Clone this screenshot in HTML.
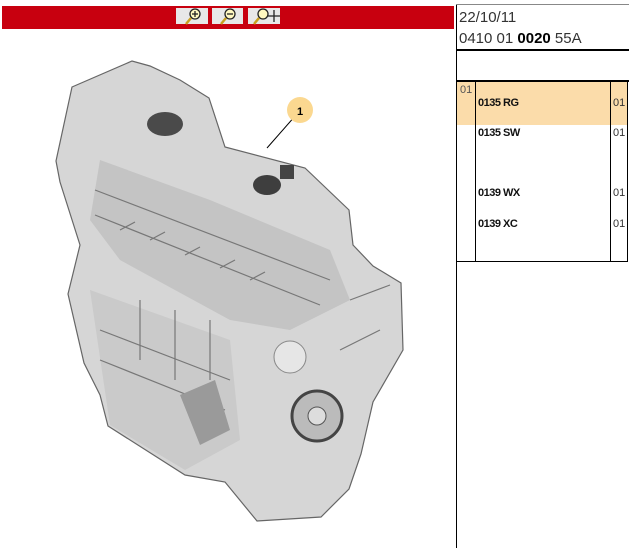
<!DOCTYPE html>
<html><head><style>
body{margin:0;width:629px;height:548px;background:#fff;position:relative;overflow:hidden;font-family:"Liberation Sans",Arial,sans-serif}
.abs{position:absolute}
.ic{position:absolute;top:8px;height:16px;background:#e8e8e8}
.t{position:absolute;font-size:11px;font-weight:bold;color:#111;letter-spacing:-0.5px}
.n{position:absolute;font-size:11px;color:#333}
</style></head><body>
<div class="abs" style="left:2px;top:6px;width:452px;height:23px;background:#c8000f"></div>
<div class="ic" style="left:176px;width:32px"></div>
<div class="ic" style="left:212px;width:31px"></div>
<div class="ic" style="left:248px;width:32px"></div>
<svg class="abs" style="left:0;top:0" width="629" height="548">
<g stroke="#222" stroke-width="1.3" fill="#fff8c0">
<circle cx="195" cy="14" r="5"/><line x1="191" y1="18" x2="186" y2="24" stroke="#c8a020" stroke-width="2.5"/>
<line x1="192" y1="14" x2="198" y2="14"/><line x1="195" y1="11" x2="195" y2="17"/>
<circle cx="230" cy="14" r="5"/><line x1="226" y1="18" x2="221" y2="24" stroke="#c8a020" stroke-width="2.5"/>
<line x1="227" y1="14" x2="233" y2="14"/>
<circle cx="263" cy="14" r="5"/><line x1="259" y1="18" x2="254" y2="24" stroke="#c8a020" stroke-width="2.5"/>
<path d="M274 10v12M268 16h12" fill="none"/>
</g>
<line x1="456.5" y1="4" x2="456.5" y2="548" stroke="#000"/>
<line x1="456" y1="4.5" x2="629" y2="4.5" stroke="#888"/>
<line x1="456" y1="50" x2="629" y2="50" stroke="#000" stroke-width="2"/>
<rect x="457" y="81" width="171" height="44" fill="#fbdcaa"/>
<line x1="456" y1="81" x2="629" y2="81" stroke="#000" stroke-width="2"/>
<line x1="475.5" y1="81" x2="475.5" y2="261" stroke="#000"/>
<line x1="610.5" y1="81" x2="610.5" y2="261" stroke="#000"/>
<line x1="627.5" y1="81" x2="627.5" y2="261" stroke="#000"/>
<line x1="456" y1="261.5" x2="628" y2="261.5" stroke="#000"/>
<polygon points="56,161 72,87 132,61 150,66 180,80 209,98 225,147 305,168 349,210 353,245 373,266 401,283 403,350 373,402 361,454 349,489 321,517 257,521 225,482 185,475 108,426 100,395 84,363 68,294 80,245 60,182" fill="#d6d6d6" stroke="#666" stroke-width="1.2"/>
<polygon points="100,160 210,200 330,250 350,300 290,330 230,320 120,260 90,220" fill="#c4c4c4"/>
<polygon points="90,290 230,340 240,440 185,470 110,425" fill="#cacaca"/>
<g stroke="#777" stroke-width="1.2" fill="none">
<path d="M95 190 L330 280"/><path d="M95 215 L320 305"/><path d="M100 330 L230 380"/><path d="M100 360 L225 410"/>
<path d="M120 230 l15 -8 M150 240 l15 -8 M185 255 l15 -8 M220 268 l15 -8 M250 280 l15 -8"/>
<path d="M140 300 v60 M175 310 v70 M210 320 v60"/>
<path d="M350 300 l40 -15 M340 350 l40 -20"/>
</g>
<polygon points="180,395 215,380 230,430 200,445" fill="#9a9a9a"/>
<ellipse cx="165" cy="124" rx="18" ry="12" fill="#4a4a4a"/>
<ellipse cx="267" cy="185" rx="14" ry="10" fill="#3e3e3e"/>
<rect x="280" y="165" width="14" height="14" fill="#444"/>
<circle cx="290" cy="357" r="16" fill="#e6e6e6" stroke="#888"/>
<circle cx="317" cy="416" r="25" fill="#bbb" stroke="#444" stroke-width="3"/>
<circle cx="317" cy="416" r="9" fill="#ddd" stroke="#555"/>
<line x1="267" y1="148" x2="296" y2="115" stroke="#000"/>
<circle cx="300" cy="110" r="13" fill="#fbd890"/>
<text x="297" y="115" font-size="11" font-weight="bold" font-family="Liberation Sans">1</text>
</svg>
<div class="abs" style="left:459px;top:9px;font-size:15px;color:#333">22/10/11</div>
<div class="abs" style="left:459px;top:30px;font-size:15px;color:#333">0410 01 <b style="color:#000">0020</b> 55A</div>
<div class="n" style="left:460px;top:84px;color:#555">01</div>
<div class="t" style="left:478px;top:97px">0135 RG</div><div class="n" style="left:613px;top:97px">01</div>
<div class="t" style="left:478px;top:127px">0135 SW</div><div class="n" style="left:613px;top:127px">01</div>
<div class="t" style="left:478px;top:187px">0139 WX</div><div class="n" style="left:613px;top:187px">01</div>
<div class="t" style="left:478px;top:218px">0139 XC</div><div class="n" style="left:613px;top:218px">01</div>
</body></html>
